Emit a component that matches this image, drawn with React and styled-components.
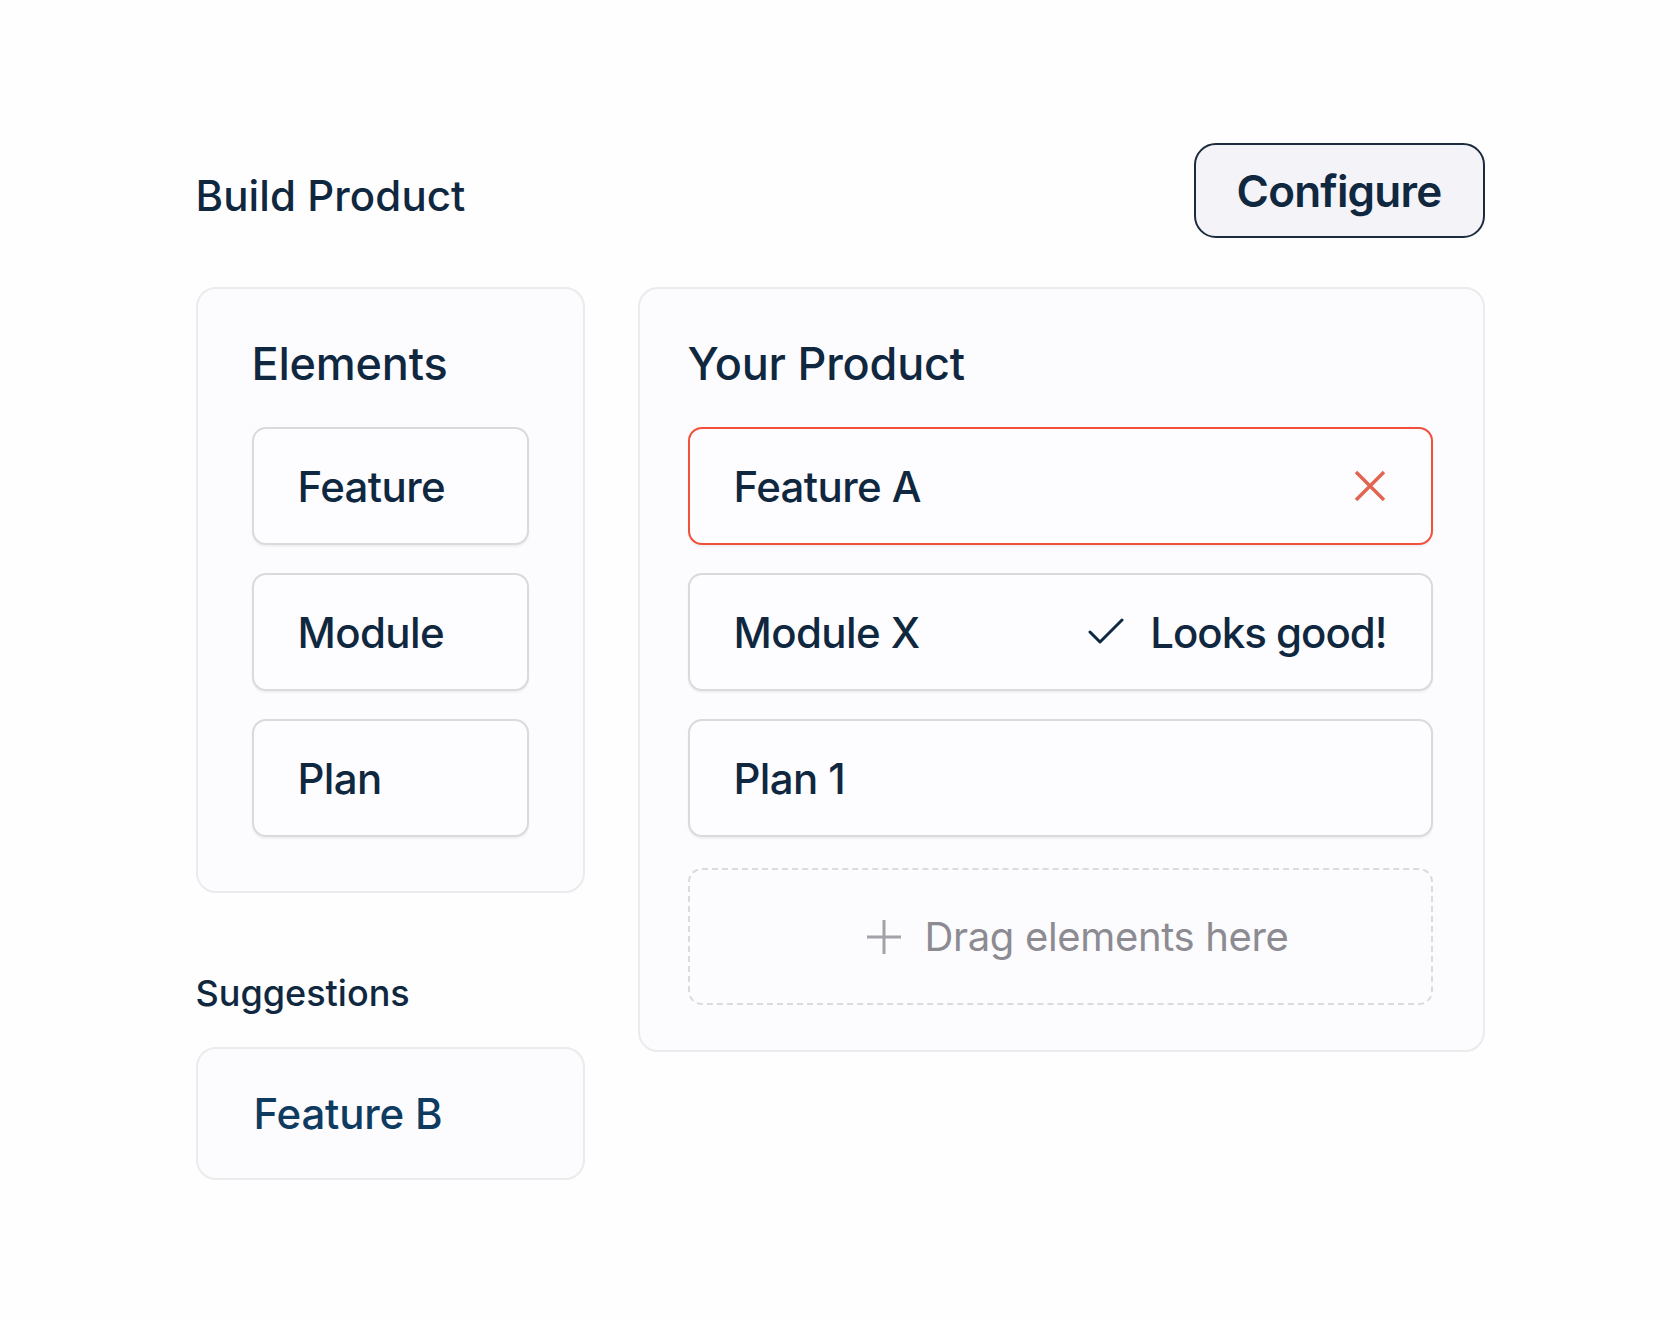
import React from "react";
import styled, { createGlobalStyle } from "styled-components";

const GlobalStyle = createGlobalStyle`
  * { box-sizing: border-box; }
  body {
    margin: 0;
    background: #fefefe;
    font-family: Inter, "Noto Sans", sans-serif;
    color: #10283f;
  }
`;

const Page = styled.div`
  width: 1289px;
  margin: 0 auto;
  padding-top: 143px;
  padding-bottom: 120px;
`;

const Header = styled.header`
  display: flex;
  justify-content: space-between;
  align-items: center;
`;

const Title = styled.h1`
  margin: 0;
  padding-top: 10px;
  font-size: 42px;
  font-weight: 500;
  letter-spacing: 0.1px;
  color: #10283f;
`;

const ConfigureButton = styled.button`
  width: 291px;
  height: 95px;
  border: 2.5px solid #1c2c3e;
  border-radius: 22px;
  background: #f4f3f7;
  font-family: Inter, sans-serif;
  font-size: 44px;
  font-weight: 600;
  letter-spacing: -0.8px;
  color: #10283f;
  cursor: pointer;
`;

const Body = styled.div`
  display: grid;
  grid-template-columns: 389px 1fr;
  column-gap: 53px;
  margin-top: 49px;
  align-items: start;
`;

const Column = styled.div`
  display: flex;
  flex-direction: column;
`;

const Panel = styled.section`
  background: #fcfbfd;
  border: 2px solid #ebeaed;
  border-radius: 20px;
  padding: ${(p) => p.$pad};
`;

const PanelTitle = styled.h2`
  margin: 0 0 36px;
  font-size: 45px;
  font-weight: 500;
  letter-spacing: -0.2px;
  color: #10283f;
`;

const List = styled.div`
  display: flex;
  flex-direction: column;
  gap: 28px;
`;

const Item = styled.div`
  height: 118px;
  display: flex;
  align-items: center;
  padding: 0 40px 0 44px;
  background: #fdfcfe;
  border: 2px solid ${(p) => (p.$error ? "#f2503b" : "#dad9dd")};
  border-radius: 14px;
  box-shadow: 0 2px 2px rgba(20, 20, 40, 0.05);
  font-size: 42px;
  font-weight: 500;
  letter-spacing: -0.6px;
  color: #10283f;
`;

const ItemLabel = styled.span`
  flex: 1;
`;

const RemoveButton = styled.span`
  display: flex;
  margin-right: 5px;
`;

const Status = styled.span`
  display: flex;
  align-items: center;
  gap: 26px;
  letter-spacing: -1px;
  padding-right: 4px;
`;

const DropZone = styled.div`
  height: 137px;
  margin-top: 3px;
  display: flex;
  align-items: center;
  justify-content: center;
  gap: 24px;
  padding-left: 35px;
  border: 2px dashed #dcdadf;
  border-radius: 14px;
  font-size: 40px;
  font-weight: 400;
  letter-spacing: -0.35px;
  color: #8c8b92;
`;

const SectionLabel = styled.h3`
  margin: 78px 0 32px;
  font-size: 36px;
  font-weight: 500;
  color: #10283f;
`;

const SuggestionCard = styled.div`
  height: 133px;
  display: flex;
  align-items: center;
  padding: 0 56px;
  background: #fcfbfd;
  border: 2px solid #ebeaed;
  border-radius: 20px;
  font-size: 42px;
  font-weight: 500;
  letter-spacing: -0.2px;
  color: #0f3b60;
`;

const CloseIcon = () => (
  <svg width="32" height="32" viewBox="0 0 32 32" fill="none">
    <path d="M2 2 30 30M30 2 2 30" stroke="#e2644f" strokeWidth="3.4" strokeLinecap="butt" />
  </svg>
);

const CheckIcon = () => (
  <svg width="36" height="28" viewBox="0 0 36 28" fill="none">
    <path d="M2 14 12 24 34 2" stroke="#10283f" strokeWidth="3" strokeLinecap="round" strokeLinejoin="round" />
  </svg>
);

const PlusIcon = () => (
  <svg width="34" height="34" viewBox="0 0 34 34" fill="none">
    <path d="M17 0v34M0 17h34" stroke="#a3a2a8" strokeWidth="3" />
  </svg>
);

export default function App() {
  return (
    <>
      <GlobalStyle />
      <Page>
        <Header>
          <Title>Build Product</Title>
          <ConfigureButton>Configure</ConfigureButton>
        </Header>
        <Body>
          <Column>
            <Panel $pad="47px 54px 54px">
              <PanelTitle>Elements</PanelTitle>
              <List>
                <Item>Feature</Item>
                <Item>Module</Item>
                <Item>Plan</Item>
              </List>
            </Panel>
            <SectionLabel>Suggestions</SectionLabel>
            <SuggestionCard>Feature B</SuggestionCard>
          </Column>
          <Panel $pad="47px 50px 45px 48px">
            <PanelTitle>Your Product</PanelTitle>
            <List>
              <Item $error>
                <ItemLabel>Feature A</ItemLabel>
                <RemoveButton>
                  <CloseIcon />
                </RemoveButton>
              </Item>
              <Item>
                <ItemLabel>Module X</ItemLabel>
                <Status>
                  <CheckIcon />
                  Looks good!
                </Status>
              </Item>
              <Item>
                <ItemLabel>Plan 1</ItemLabel>
              </Item>
              <DropZone>
                <PlusIcon />
                Drag elements here
              </DropZone>
            </List>
          </Panel>
        </Body>
      </Page>
    </>
  );
}
